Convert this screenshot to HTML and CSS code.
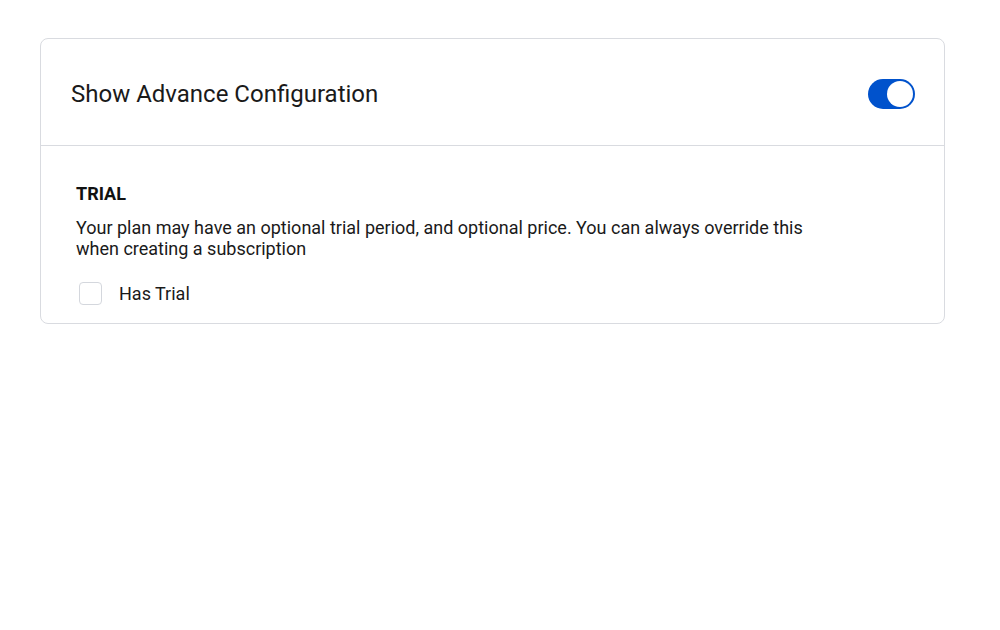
FILE: index.html
```html
<!DOCTYPE html>
<html>
<head>
<meta charset="utf-8">
<link rel="stylesheet" href="styles.css">
</head>
<body>
<div class="card">
  <div class="card-header">
    <div class="title">Show Advance Configuration</div>
    <div class="toggle"><div class="knob"></div></div>
  </div>
  <div class="card-body">
    <div class="section-title">TRIAL</div>
    <p class="desc">Your plan may have an optional trial period, and optional price. You can always override this when creating a subscription</p>
    <label class="check-row">
      <span class="checkbox"></span>
      <span class="check-label">Has Trial</span>
    </label>
  </div>
</div>
</body>
</html>
```

FILE: styles.css
```css
* { box-sizing: border-box; }
body {
  margin: 0;
  background: #fff;
  font-family: Roboto, "Liberation Sans", sans-serif;
  color: #111;
}
.card {
  margin: 38px 55px 0 40px;
  border: 1px solid #d9dbe0;
  border-radius: 8px;
  width: 905px;
}
.card-header {
  height: 107px;
  border-bottom: 1px solid #d9dbe0;
  display: flex;
  align-items: center;
  justify-content: space-between;
  padding: 4px 29px 0 30px;
}
.title {
  font-size: 24px;
  color: #1a1a1a;
}
.toggle {
  width: 47px;
  height: 30px;
  border-radius: 15px;
  background: #0052cc;
  display: flex;
  align-items: center;
  justify-content: flex-end;
  padding: 2px;
}
.knob {
  width: 26px;
  height: 26px;
  border-radius: 50%;
  background: #fff;
}
.card-body {
  padding: 38px 35px 18px 35px;
}
.section-title {
  font-size: 18px;
  font-weight: 700;
  line-height: 20px;
  color: #111;
}
.desc {
  margin: 13px 0 0 0;
  font-size: 18px;
  line-height: 21px;
  max-width: 750px;
  color: #1a1a1a;
}
.check-row {
  display: flex;
  align-items: center;
  margin-top: 23px;
  padding-left: 3px;
}
.checkbox {
  width: 23px;
  height: 23px;
  border: 1px solid #d4d7dd;
  border-radius: 4px;
  background: #fff;
}
.check-label {
  margin-left: 17px;
  font-size: 18px;
  color: #1a1a1a;
}
```
